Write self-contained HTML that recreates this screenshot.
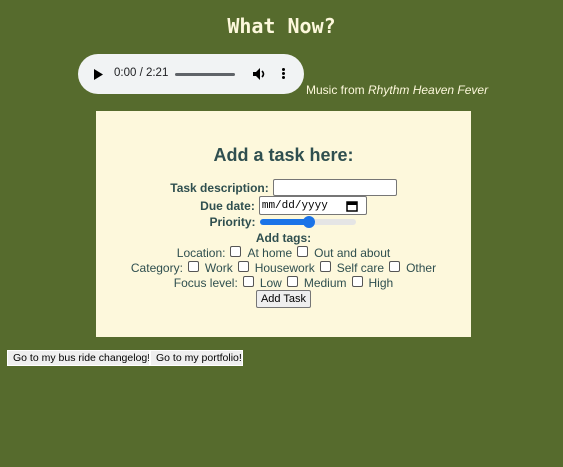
<!DOCTYPE html>
<html><head><style>
body{margin:0;width:563px;height:467px;background:#566b2d;font-family:"Liberation Sans",sans-serif;position:relative;overflow:hidden}
.a{position:absolute}
h1{position:absolute;top:14px;left:0;width:563px;text-align:center;margin:0;font:bold 20px "DejaVu Sans Mono","Liberation Mono",monospace;color:#fdf8dc}
.audio{left:78px;top:54px;width:226px;height:40px;border-radius:20px;background:#f1f3f4;color:#202124;font-size:11.5px}
.music{left:306px;top:83px;color:#fdf8dc;font-size:12px}
.panel{left:96px;top:111px;width:375px;height:226px;background:#fdf8dc;color:#2f4f4f}
.row{position:absolute;left:0;width:375px;display:flex;justify-content:center;align-items:center;font-size:12px;white-space:pre}
.b{font-weight:bold}
.cb{display:inline-block;width:9px;height:9px;border:1px solid #555;border-radius:2px;background:#fff;margin:0 6px 0 5px;position:relative;top:-2px}
.in{border:1px solid #767676;background:#fff;height:15px;border-radius:2px;margin-left:4px}
.btn{background:#efefef;border:1px solid #767676;border-radius:2px;font-size:11px;color:#000;padding:2px 4px}
.btn2{position:absolute;top:350px;height:16px;background:#efefef;border:1px solid #fff;font-size:10.5px;color:#000;line-height:14px;padding:0 5px;box-sizing:border-box;white-space:nowrap;overflow:hidden}
</style></head><body>
<h1>What Now?</h1>
<div class="a audio">
<svg class="a" style="left:16px;top:15px" width="10" height="11"><path d="M0 0L9 5.5L0 11Z" fill="#000"/></svg>
<span class="a" style="left:36px;top:13px">0:00 / 2:21</span>
<div class="a" style="left:97px;top:19px;width:60px;height:3px;background:#5f6368;border-radius:2px"></div>
<svg class="a" style="left:174px;top:13px" width="14" height="14"><path d="M1 5H4L8 1V13L4 9H1Z" fill="#000"/><path d="M10 4Q13 7 10 10" stroke="#000" stroke-width="1.6" fill="none"/></svg>
<div class="a" style="left:204px;top:14px;width:3px;height:3px;background:#000;border-radius:2px;box-shadow:0 4px 0 #000,0 8px 0 #000"></div>
</div>
<div class="a music">Music from <i>Rhythm Heaven Fever</i></div>
<div class="a panel">
<div class="row" style="top:34px;font-size:18px;font-weight:bold">Add a task here:</div>
<div class="row b" style="top:68px">Task description:<span class="in" style="width:122px"></span></div>
<div class="row b" style="top:85px">Due date:<span class="in" style="width:104px;height:17px;font:normal 11px 'Liberation Mono',monospace;color:#000;display:flex;align-items:center;padding-left:2px">mm/dd/yyyy <svg width="12" height="12" style="margin-left:12px"><rect x="1" y="2" width="10" height="9" fill="none" stroke="#000" stroke-width="1.5"/><rect x="1" y="2" width="10" height="3" fill="#000"/></svg></span></div>
<div class="row b" style="top:104px">Priority:<span style="position:relative;width:98px;height:14px;margin-left:4px"><span class="a" style="left:0;top:4px;width:96px;height:6px;border-radius:3px;background:#e5e5e5"></span><span class="a" style="left:0;top:4px;width:48px;height:6px;border-radius:3px;background:#1a73e8"></span><span class="a" style="left:43px;top:1px;width:12px;height:12px;border-radius:6px;background:#1a73e8"></span></span></div>
<div class="row b" style="top:120px">Add tags:</div>
<div class="row" style="top:135px">Location:<span class="cb"></span>At home<span class="cb"></span>Out and about</div>
<div class="row" style="top:150px">Category:<span class="cb"></span>Work<span class="cb"></span>Housework<span class="cb"></span>Self care<span class="cb"></span>Other</div>
<div class="row" style="top:165px">Focus level:<span class="cb"></span>Low<span class="cb"></span>Medium<span class="cb"></span>High</div>
<div class="row" style="top:179px"><span class="btn">Add Task</span></div>
</div>
<div class="btn2" style="left:7px;width:143px">Go to my bus ride changelog!</div>
<div class="btn2" style="left:150px;width:93px">Go to my portfolio!</div>
</body></html>
